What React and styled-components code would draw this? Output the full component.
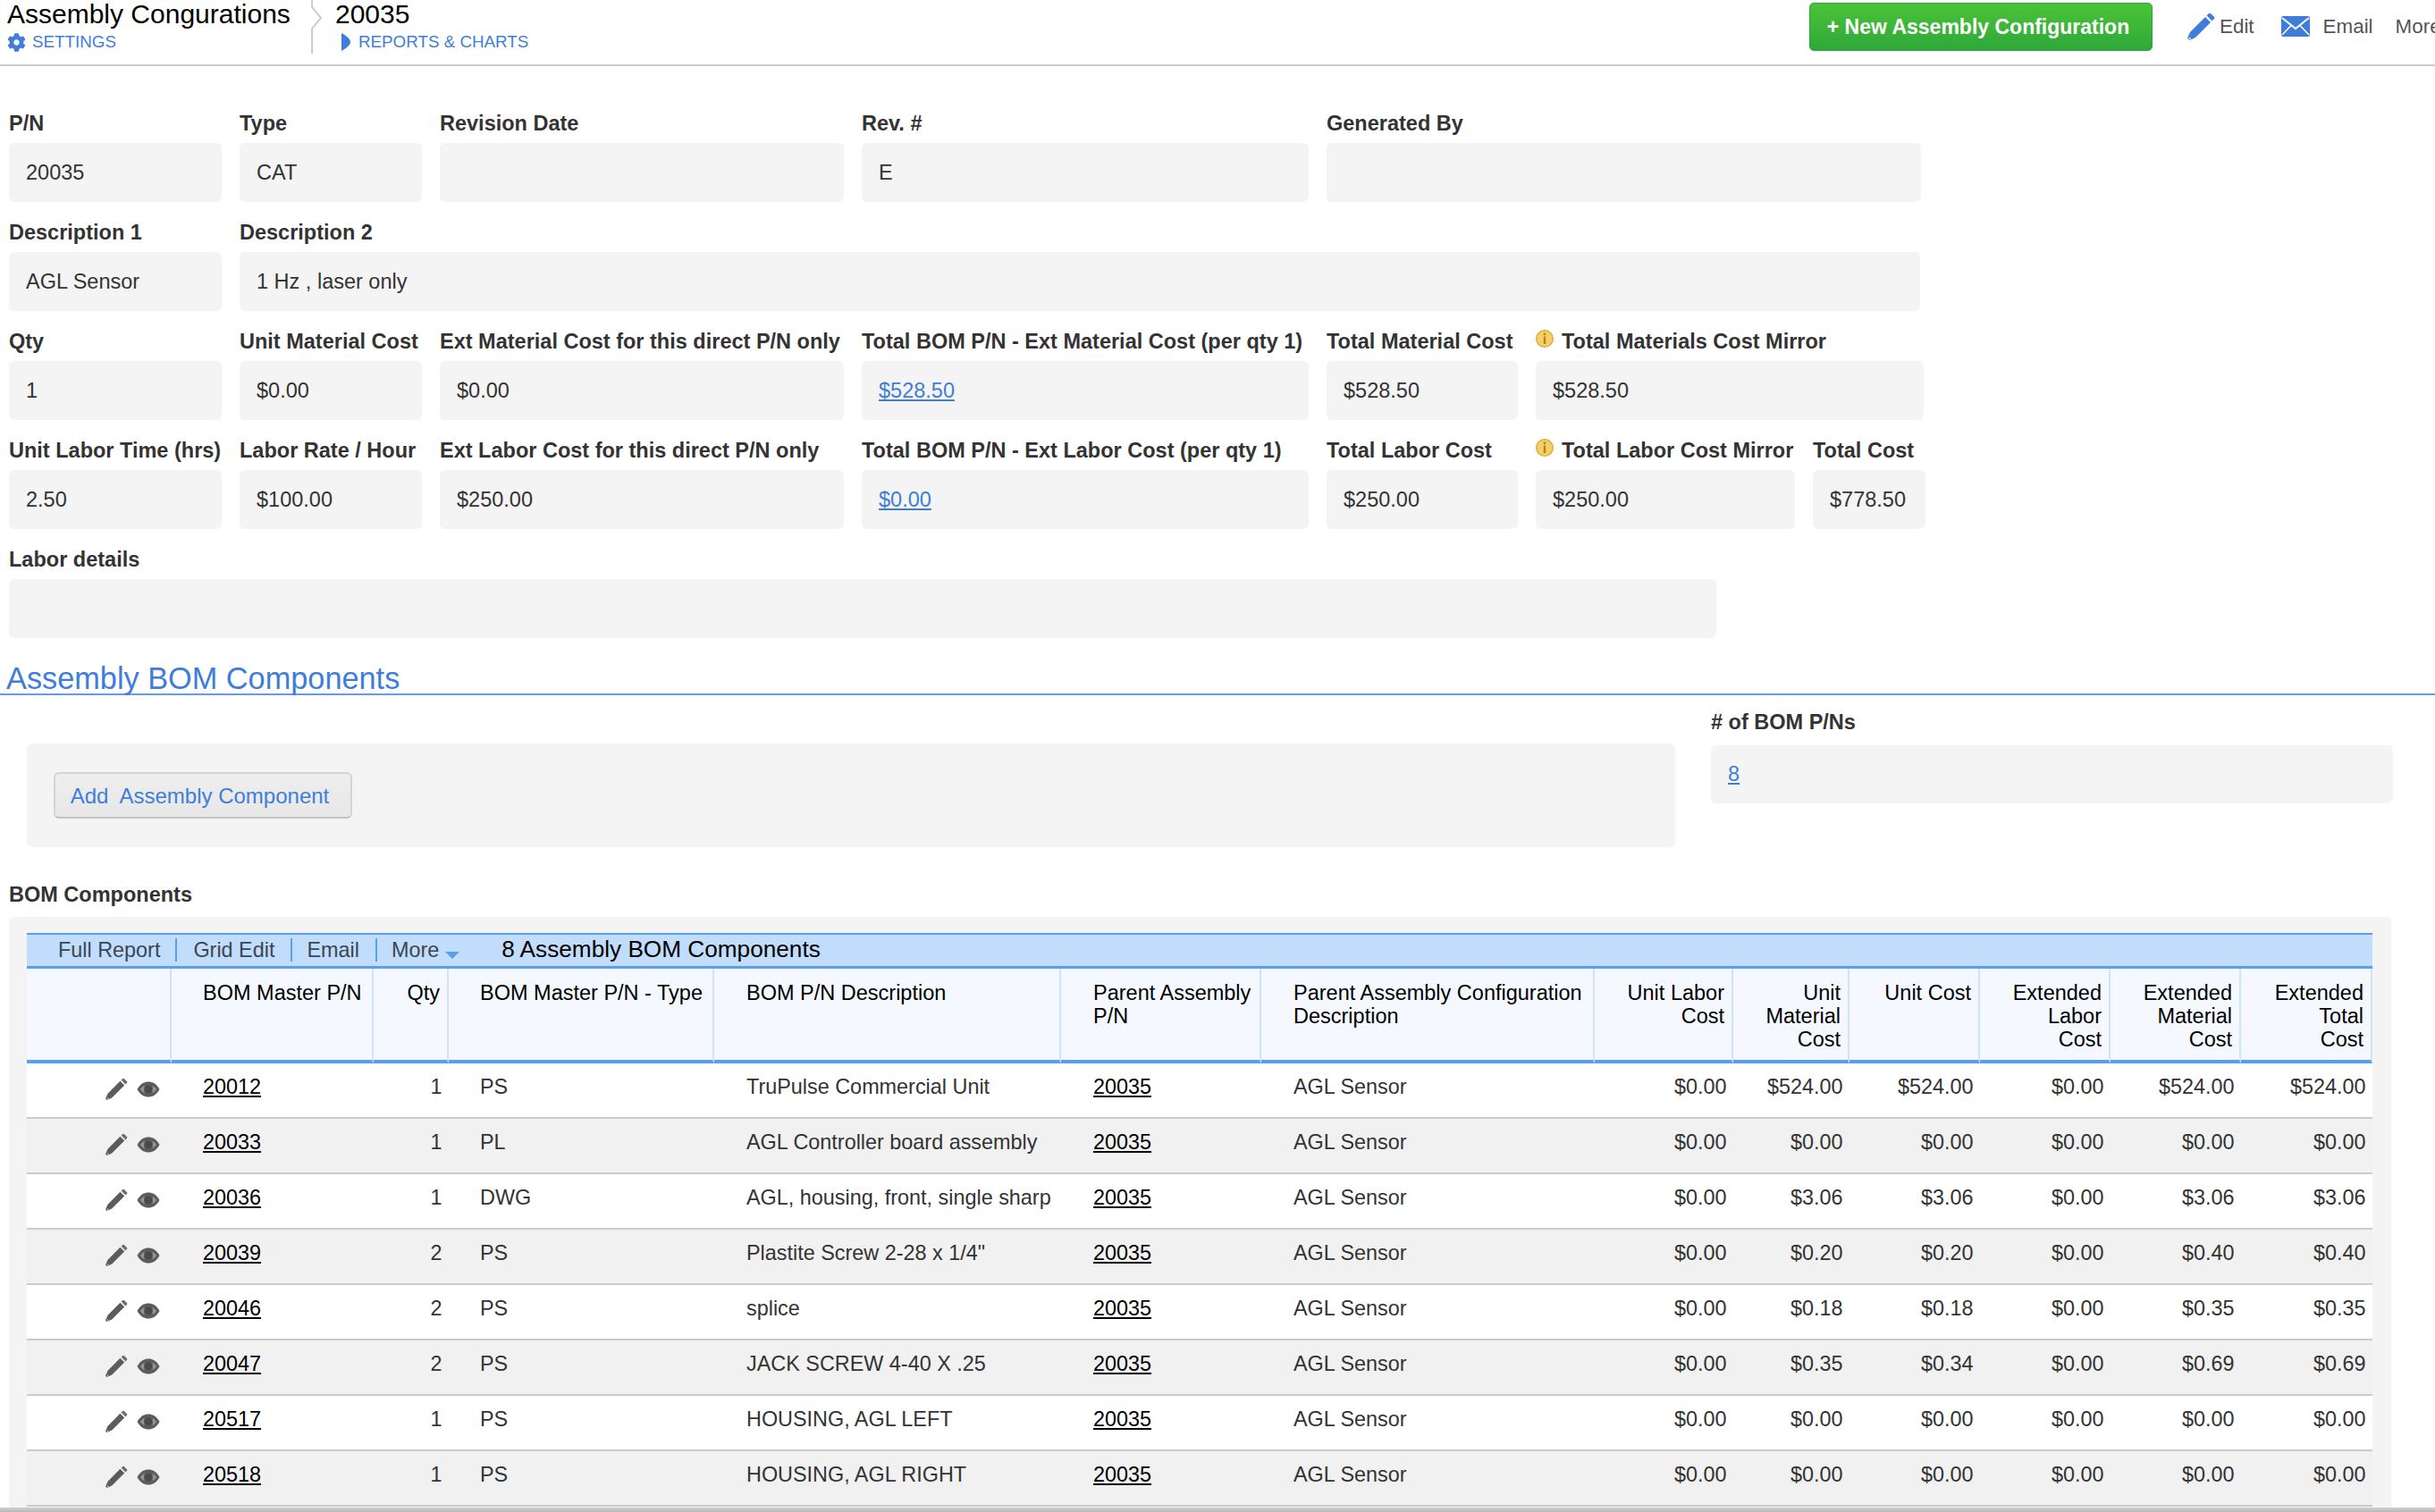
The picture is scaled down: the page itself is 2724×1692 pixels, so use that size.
import React from "react";
import styled, { createGlobalStyle } from "styled-components";
import { FaCog } from "react-icons/fa";

const Global = createGlobalStyle`
  html, body { margin: 0; padding: 0; height: 100%; overflow: hidden; background: #fff; }
  body { font-family: "Liberation Sans", Arial, Helvetica, sans-serif; font-size: 23.5px; color: #333; }
  * { box-sizing: border-box; }
`;

const Page = styled.div`
  position: relative;
  width: 2724px;
  height: 1692px;
  overflow: hidden;
`;
const Header = styled.header`
  display: flex;
  align-items: flex-start;
  height: 74px;
  border-bottom: 2px solid #ccc;
`;
const Crumb = styled.div`
  display: flex;
  flex-direction: column;
  padding-left: ${p => p.$pad}px;
  width: ${p => p.$w}px;
`;
const Title = styled.div`
  font-size: 30px;
  line-height: 32px;
  color: #000;
  height: 34px;
  white-space: nowrap;
`;
const SubLink = styled.a`
  display: flex;
  align-items: center;
  gap: ${p => p.$gap}px;
  font-size: 18.8px;
  line-height: 24px;
  color: #3f7ddb;
  white-space: nowrap;
  margin-top: 1px;
`;
const Triangle = styled.svg`
  flex: none;
  margin-left: 6px;
`;
const CrumbDivider = styled.svg`
  flex: none;
  width: 16px;
  height: 60px;
  margin-right: 10px;
`;
const Actions = styled.div`
  margin-left: auto;
  display: flex;
  align-items: center;
  height: 60px;
  width: 700px;
  flex: none;
`;
const NewButton = styled.button`
  flex: none;
  width: 384px;
  height: 54px;
  border: 1px solid #2ea43a;
  border-radius: 5px;
  background: linear-gradient(#4bc338, #2ea83a);
  color: #fff;
  font-family: inherit;
  font-weight: bold;
  font-size: 23px;
  padding: 0 6px 0 0;
  margin-right: 38px;
  white-space: nowrap;
`;
const ActionLink = styled.a`
  display: flex;
  align-items: center;
  flex: none;
  gap: ${p => p.$gap}px;
  font-size: 22.4px;
  color: #555;
  margin-right: ${p => p.$mr}px;
  white-space: nowrap;
`;
const Form = styled.div`
  display: flex;
  flex-direction: column;
  padding: 30px 0 0 10px;
`;
const FormRow = styled.div`
  display: flex;
  gap: 20px;
`;
const Group = styled.div`
  flex: none;
  width: ${p => p.$w}px;
`;
const Label = styled.div`
  display: flex;
  align-items: center;
  height: 56px;
  padding: 21px 0 9px;
  font-weight: bold;
  line-height: 26px;
  color: #333;
  white-space: nowrap;
`;
const Field = styled.div`
  display: flex;
  align-items: center;
  height: 66px;
  padding: 1px 19px 0;
  background: #f4f4f4;
  border-radius: 6px;
  color: #333;
`;
const ValueLink = styled.a`
  color: #3f7ddb;
  text-decoration: underline;
`;
const InfoIcon = styled.svg`
  flex: none;
  width: 20px;
  height: 20px;
  margin: -6px 9px 0 0;
`;
const SectionTitle = styled.h2`
  margin: 22px 0 0;
  height: 40px;
  padding-left: 7px;
  font-size: 34.3px;
  line-height: 46px;
  font-weight: normal;
  color: #3f7ddb;
  border-bottom: 2px solid #6a9be6;
  box-sizing: content-box;
`;
const SectionRow = styled.div`
  display: flex;
  align-items: flex-start;
  padding-left: 30px;
`;
const AddPanel = styled.div`
  flex: none;
  display: flex;
  align-items: flex-start;
  width: 1844px;
  height: 116px;
  margin-top: 54px;
  padding: 32px 30px;
  background: #f4f4f4;
  border-radius: 6px;
`;
const AddButton = styled.button`
  width: 334px;
  height: 52px;
  padding: 2px 7px 0 0;
  border: 2px solid #d4d4d4;
  border-bottom-color: #c2c2c2;
  border-radius: 6px;
  background: linear-gradient(#eeeeee, #e7e7e7);
  font-family: inherit;
  font-size: 24px;
  color: #3f7ddb;
  white-space: pre;
`;
const CountGroup = styled(Group)`
  margin-left: 40px;
`;
const CountLabel = styled(Label)`
  padding: 17px 0 13px;
`;
const CountField = styled(Field)`
  height: 65px;
  padding-top: 0;
`;
const TableLabel = styled(Label)`
  margin: 22px 0 0 10px;
  padding: 18px 0 12px;
`;
const GridPanel = styled.div`
  margin-left: 10px;
  width: 2665px;
  height: 680px;
  padding: 18px 21px 0 20px;
  background: #f4f4f4;
  border-radius: 6px 6px 0 0;
`;
const Toolbar = styled.div`
  display: flex;
  align-items: center;
  height: 40px;
  padding: 0 0 2px 35px;
  border-top: 2px solid #58a0ec;
  border-bottom: 3px solid #58a0ec;
  background: #c2dcfb;
`;
const ToolLink = styled.a`
  font-size: 23.4px;
  line-height: 26px;
  color: #3a4654;
  padding-right: ${p => p.$pr}px;
  margin-right: ${p => p.$mr}px;
  border-right: ${p => (p.$sep ? "2px solid #58a0ec" : "none")};
  white-space: nowrap;
`;
const Caret = styled.span`
  display: inline-block;
  width: 0;
  height: 0;
  margin: 0 47px 0 0;
  position: relative;
  top: 6px;
  flex: none;
  border-left: 8px solid transparent;
  border-right: 8px solid transparent;
  border-top: 8px solid #58a0ec;
`;
const GridTitle = styled.span`
  color: #000;
  font-size: 26.2px;
  white-space: nowrap;
`;
const Table = styled.table`
  table-layout: fixed;
  border-collapse: separate;
  border-spacing: 0;
  width: 2624px;
`;
const Th = styled.th`
  height: 106px;
  padding: 14px ${p => (p.$right ? "8px" : "6px")} 0 ${p => (p.$tight ? "35px" : "36px")};
  vertical-align: top;
  text-align: ${p => (p.$right ? "right" : "left")};
  font-weight: normal;
  font-size: 23.5px;
  line-height: 26px;
  color: #000;
  background: #f5f9ff;
  border-right: 2px solid #cfe3fa;
  border-bottom: 4px solid #58a0ec;
`;
const Tr = styled.tr`
  background: ${p => (p.$alt ? "#f1f1f1" : "#fff")};
`;
const Td = styled.td`
  height: 62px;
  padding: 0 ${p => (p.$right ? "7.5px" : "6px")} 7px ${p => (p.$right ? "6px" : p.$tight ? "35px" : "36px")};
  text-align: ${p => (p.$right ? "right" : "left")};
  white-space: nowrap;
  overflow: hidden;
  font-size: 23.4px;
  color: #333;
  border-bottom: 2px solid #ccc;
`;
const IconCell = styled(Td)`
  padding: 0 13px 3px 0;
  text-align: right;
`;
const IconPair = styled.div`
  display: flex;
  justify-content: flex-end;
  align-items: center;
  gap: 10px;
`;
const RowLink = styled.a`
  color: #000;
  text-decoration: underline;
`;
const BottomShade = styled.div`
  position: absolute;
  left: 0;
  right: 0;
  bottom: 0;
  height: 5px;
  background: linear-gradient(#d0d0d0, #b8b8b8);
`;
const Gear = styled(FaCog)`
  width: 21px;
  height: 21px;
  color: #3f7ddb;
  flex: none;
`;

const PencilBlue = () => (
  <svg width="32" height="32" viewBox="0 0 32 32">
    <path d="M21 5 L27 11 L10 28 L3.5 31 L1 28.5 L4 22 Z" fill="#3f7ddb" />
    <path d="M22.6 3.4 L25 1 Q26 0.3 27 1 L31 5 Q31.7 6 31 7 L28.6 9.4 Z" fill="#3f7ddb" />
    <path d="M3 27 L5.5 29.5 L2.6 30.2 Z" fill="#dbe7fa" />
  </svg>
);
const Envelope = () => (
  <svg width="32" height="24" viewBox="0 0 32 24">
    <rect x="0" y="0" width="32" height="23" rx="2" fill="#3f7ddb" />
    <path d="M1 2 L16 14 L31 2" fill="none" stroke="#fff" strokeWidth="2" />
    <path d="M1 21 L11 10.5 M31 21 L21 10.5" fill="none" stroke="#fff" strokeWidth="1.6" />
  </svg>
);
const Pencil = () => (
  <svg width="26" height="26" viewBox="0 0 26 26">
    <path d="M17.4 3.8 L22.2 8.6 L8.2 22.4 L2.6 25 L1 23.4 L3.6 17.8 Z" fill="#5c5c5c" />
    <path d="M18.6 2.6 L20.4 0.9 Q21 0.4 21.8 0.9 L25.1 4.2 Q25.6 5 25.1 5.6 L23.4 7.4 Z" fill="#6e6e6e" />
    <path d="M3 22 L4.8 23.6 L2.8 24 Z" fill="#ccc" />
  </svg>
);
const Eye = () => (
  <svg width="26" height="18" viewBox="0 0 26 18">
    <path d="M0.5 9 C4 2.5 8.5 0.5 13 0.5 C17.5 0.5 22 2.5 25.5 9 C22 15.5 17.5 17.5 13 17.5 C8.5 17.5 4 15.5 0.5 9 Z" fill="#5c5c5c" />
    <path d="M4 9 C5.5 6.8 7 5.6 8.6 5 C7.9 7.5 7.9 10.5 8.6 13 C7 12.4 5.5 11.2 4 9 Z M22 9 C20.5 6.8 19 5.6 17.4 5 C18.1 7.5 18.1 10.5 17.4 13 C19 12.4 20.5 11.2 22 9 Z" fill="#969696" />
    <circle cx="13" cy="9" r="4.4" fill="#4a4a4a" />
  </svg>
);
const Info = () => (
  <InfoIcon viewBox="0 0 20 20">
    <circle cx="10" cy="10" r="9.3" fill="#f4cf6a" stroke="#dca92f" strokeWidth="1.3" />
    <rect x="8.8" y="3.6" width="2.4" height="2.6" fill="#b9831c" />
    <rect x="8.8" y="7.6" width="2.4" height="8.4" fill="#b9831c" />
  </InfoIcon>
);

const F = ({ w, label, info, value, link }) => (
  <Group $w={w}>
    <Label>
      {info && <Info />}
      {label}
    </Label>
    <Field>{link ? <ValueLink>{value}</ValueLink> : value}</Field>
  </Group>
);

const cols = [162, 226, 84, 297, 388, 224, 373, 155, 130, 146, 146, 146, 147];
const heads = [
  ["", false],
  ["BOM Master P/N", false],
  ["Qty", true],
  ["BOM Master P/N - Type", false],
  ["BOM P/N Description", false],
  ["Parent Assembly P/N", false],
  ["Parent Assembly Configuration Description", false],
  ["Unit Labor Cost", true],
  ["Unit Material Cost", true],
  ["Unit Cost", true],
  ["Extended Labor Cost", true],
  ["Extended Material Cost", true],
  ["Extended Total Cost", true],
];
const rows = [
  ["20012", "1", "PS", "TruPulse Commercial Unit", "$0.00", "$524.00", "$524.00", "$0.00", "$524.00", "$524.00"],
  ["20033", "1", "PL", "AGL Controller board assembly", "$0.00", "$0.00", "$0.00", "$0.00", "$0.00", "$0.00"],
  ["20036", "1", "DWG", "AGL, housing, front, single sharp", "$0.00", "$3.06", "$3.06", "$0.00", "$3.06", "$3.06"],
  ["20039", "2", "PS", 'Plastite Screw 2-28 x 1/4"', "$0.00", "$0.20", "$0.20", "$0.00", "$0.40", "$0.40"],
  ["20046", "2", "PS", "splice", "$0.00", "$0.18", "$0.18", "$0.00", "$0.35", "$0.35"],
  ["20047", "2", "PS", "JACK SCREW 4-40 X .25", "$0.00", "$0.35", "$0.34", "$0.00", "$0.69", "$0.69"],
  ["20517", "1", "PS", "HOUSING, AGL LEFT", "$0.00", "$0.00", "$0.00", "$0.00", "$0.00", "$0.00"],
  ["20518", "1", "PS", "HOUSING, AGL RIGHT", "$0.00", "$0.00", "$0.00", "$0.00", "$0.00", "$0.00"],
];

export default function App() {
  return (
    <Page>
      <Global />
      <Header>
        <Crumb $pad={8} $w={348}>
          <Title>Assembly Congurations</Title>
          <SubLink $gap={7}>
            <Gear />
            SETTINGS
          </SubLink>
        </Crumb>
        <CrumbDivider viewBox="0 0 16 60">
          <path d="M1 0 V8 L11 20 L1 32 V60" fill="none" stroke="#ccc" strokeWidth="2" />
        </CrumbDivider>
        <Crumb $pad={1} $w={400}>
          <Title>20035</Title>
          <SubLink $gap={9}>
            <Triangle width="11" height="20" viewBox="0 0 11 20">
              <path d="M1 0 C7 3 11 7 11 10 C11 13 7 17 1 20 Z" fill="#3f7ddb" />
            </Triangle>
            REPORTS &amp; CHARTS
          </SubLink>
        </Crumb>
        <Actions>
          <NewButton>+ New Assembly Configuration</NewButton>
          <ActionLink $gap={5} $mr={30}>
            <PencilBlue />
            Edit
          </ActionLink>
          <ActionLink $gap={15} $mr={25}>
            <Envelope />
            Email
          </ActionLink>
          <ActionLink $gap={0} $mr={0}>More</ActionLink>
        </Actions>
      </Header>
      <Form>
        <FormRow>
          <F w={238} label="P/N" value="20035" />
          <F w={204} label="Type" value="CAT" />
          <F w={452} label="Revision Date" value="" />
          <F w={500} label="Rev. #" value="E" />
          <F w={665} label="Generated By" value="" />
        </FormRow>
        <FormRow>
          <F w={238} label="Description 1" value="AGL Sensor" />
          <F w={1880} label="Description 2" value="1 Hz , laser only" />
        </FormRow>
        <FormRow>
          <F w={238} label="Qty" value="1" />
          <F w={204} label="Unit Material Cost" value="$0.00" />
          <F w={452} label="Ext Material Cost for this direct P/N only" value="$0.00" />
          <F w={500} label="Total BOM P/N - Ext Material Cost (per qty 1)" value="$528.50" link />
          <F w={214} label="Total Material Cost" value="$528.50" />
          <F w={434} label="Total Materials Cost Mirror" value="$528.50" info />
        </FormRow>
        <FormRow>
          <F w={238} label="Unit Labor Time (hrs)" value="2.50" />
          <F w={204} label="Labor Rate / Hour" value="$100.00" />
          <F w={452} label="Ext Labor Cost for this direct P/N only" value="$250.00" />
          <F w={500} label="Total BOM P/N - Ext Labor Cost (per qty 1)" value="$0.00" link />
          <F w={214} label="Total Labor Cost" value="$250.00" />
          <F w={290} label="Total Labor Cost Mirror" value="$250.00" info />
          <F w={126} label="Total Cost" value="$778.50" />
        </FormRow>
        <FormRow>
          <F w={1910} label="Labor details" value="" />
        </FormRow>
      </Form>
      <SectionTitle>Assembly BOM Components</SectionTitle>
      <SectionRow>
        <AddPanel>
          <AddButton>Add  Assembly Component</AddButton>
        </AddPanel>
        <CountGroup $w={763}>
          <CountLabel># of BOM P/Ns</CountLabel>
          <CountField>
            <ValueLink>8</ValueLink>
          </CountField>
        </CountGroup>
      </SectionRow>
      <TableLabel>BOM Components</TableLabel>
      <GridPanel>
        <Toolbar>
          <ToolLink $pr={17} $mr={18} $sep>Full Report</ToolLink>
          <ToolLink $pr={18} $mr={16} $sep>Grid Edit</ToolLink>
          <ToolLink $pr={18} $mr={16} $sep>Email</ToolLink>
          <ToolLink $pr={7} $mr={0}>More</ToolLink>
          <Caret />
          <GridTitle>8 Assembly BOM Components</GridTitle>
        </Toolbar>
        <Table>
          <colgroup>
            {cols.map((w, i) => (
              <col key={i} style={{ width: w }} />
            ))}
          </colgroup>
          <thead>
            <tr>
              {heads.map(([h, right], i) => (
                <Th key={i} $right={right} $tight={i === 1 || i === 3}>{h}</Th>
              ))}
            </tr>
          </thead>
          <tbody>
            {rows.map((r, i) => (
              <Tr key={r[0]} $alt={i % 2 === 1}>
                <IconCell>
                  <IconPair>
                    <Pencil />
                    <Eye />
                  </IconPair>
                </IconCell>
                <Td $tight><RowLink>{r[0]}</RowLink></Td>
                <Td $right>{r[1]}</Td>
                <Td $tight>{r[2]}</Td>
                <Td>{r[3]}</Td>
                <Td><RowLink>20035</RowLink></Td>
                <Td>AGL Sensor</Td>
                {r.slice(4).map((v, j) => (
                  <Td key={j} $right>{v}</Td>
                ))}
              </Tr>
            ))}
          </tbody>
        </Table>
      </GridPanel>
      <BottomShade />
    </Page>
  );
}
